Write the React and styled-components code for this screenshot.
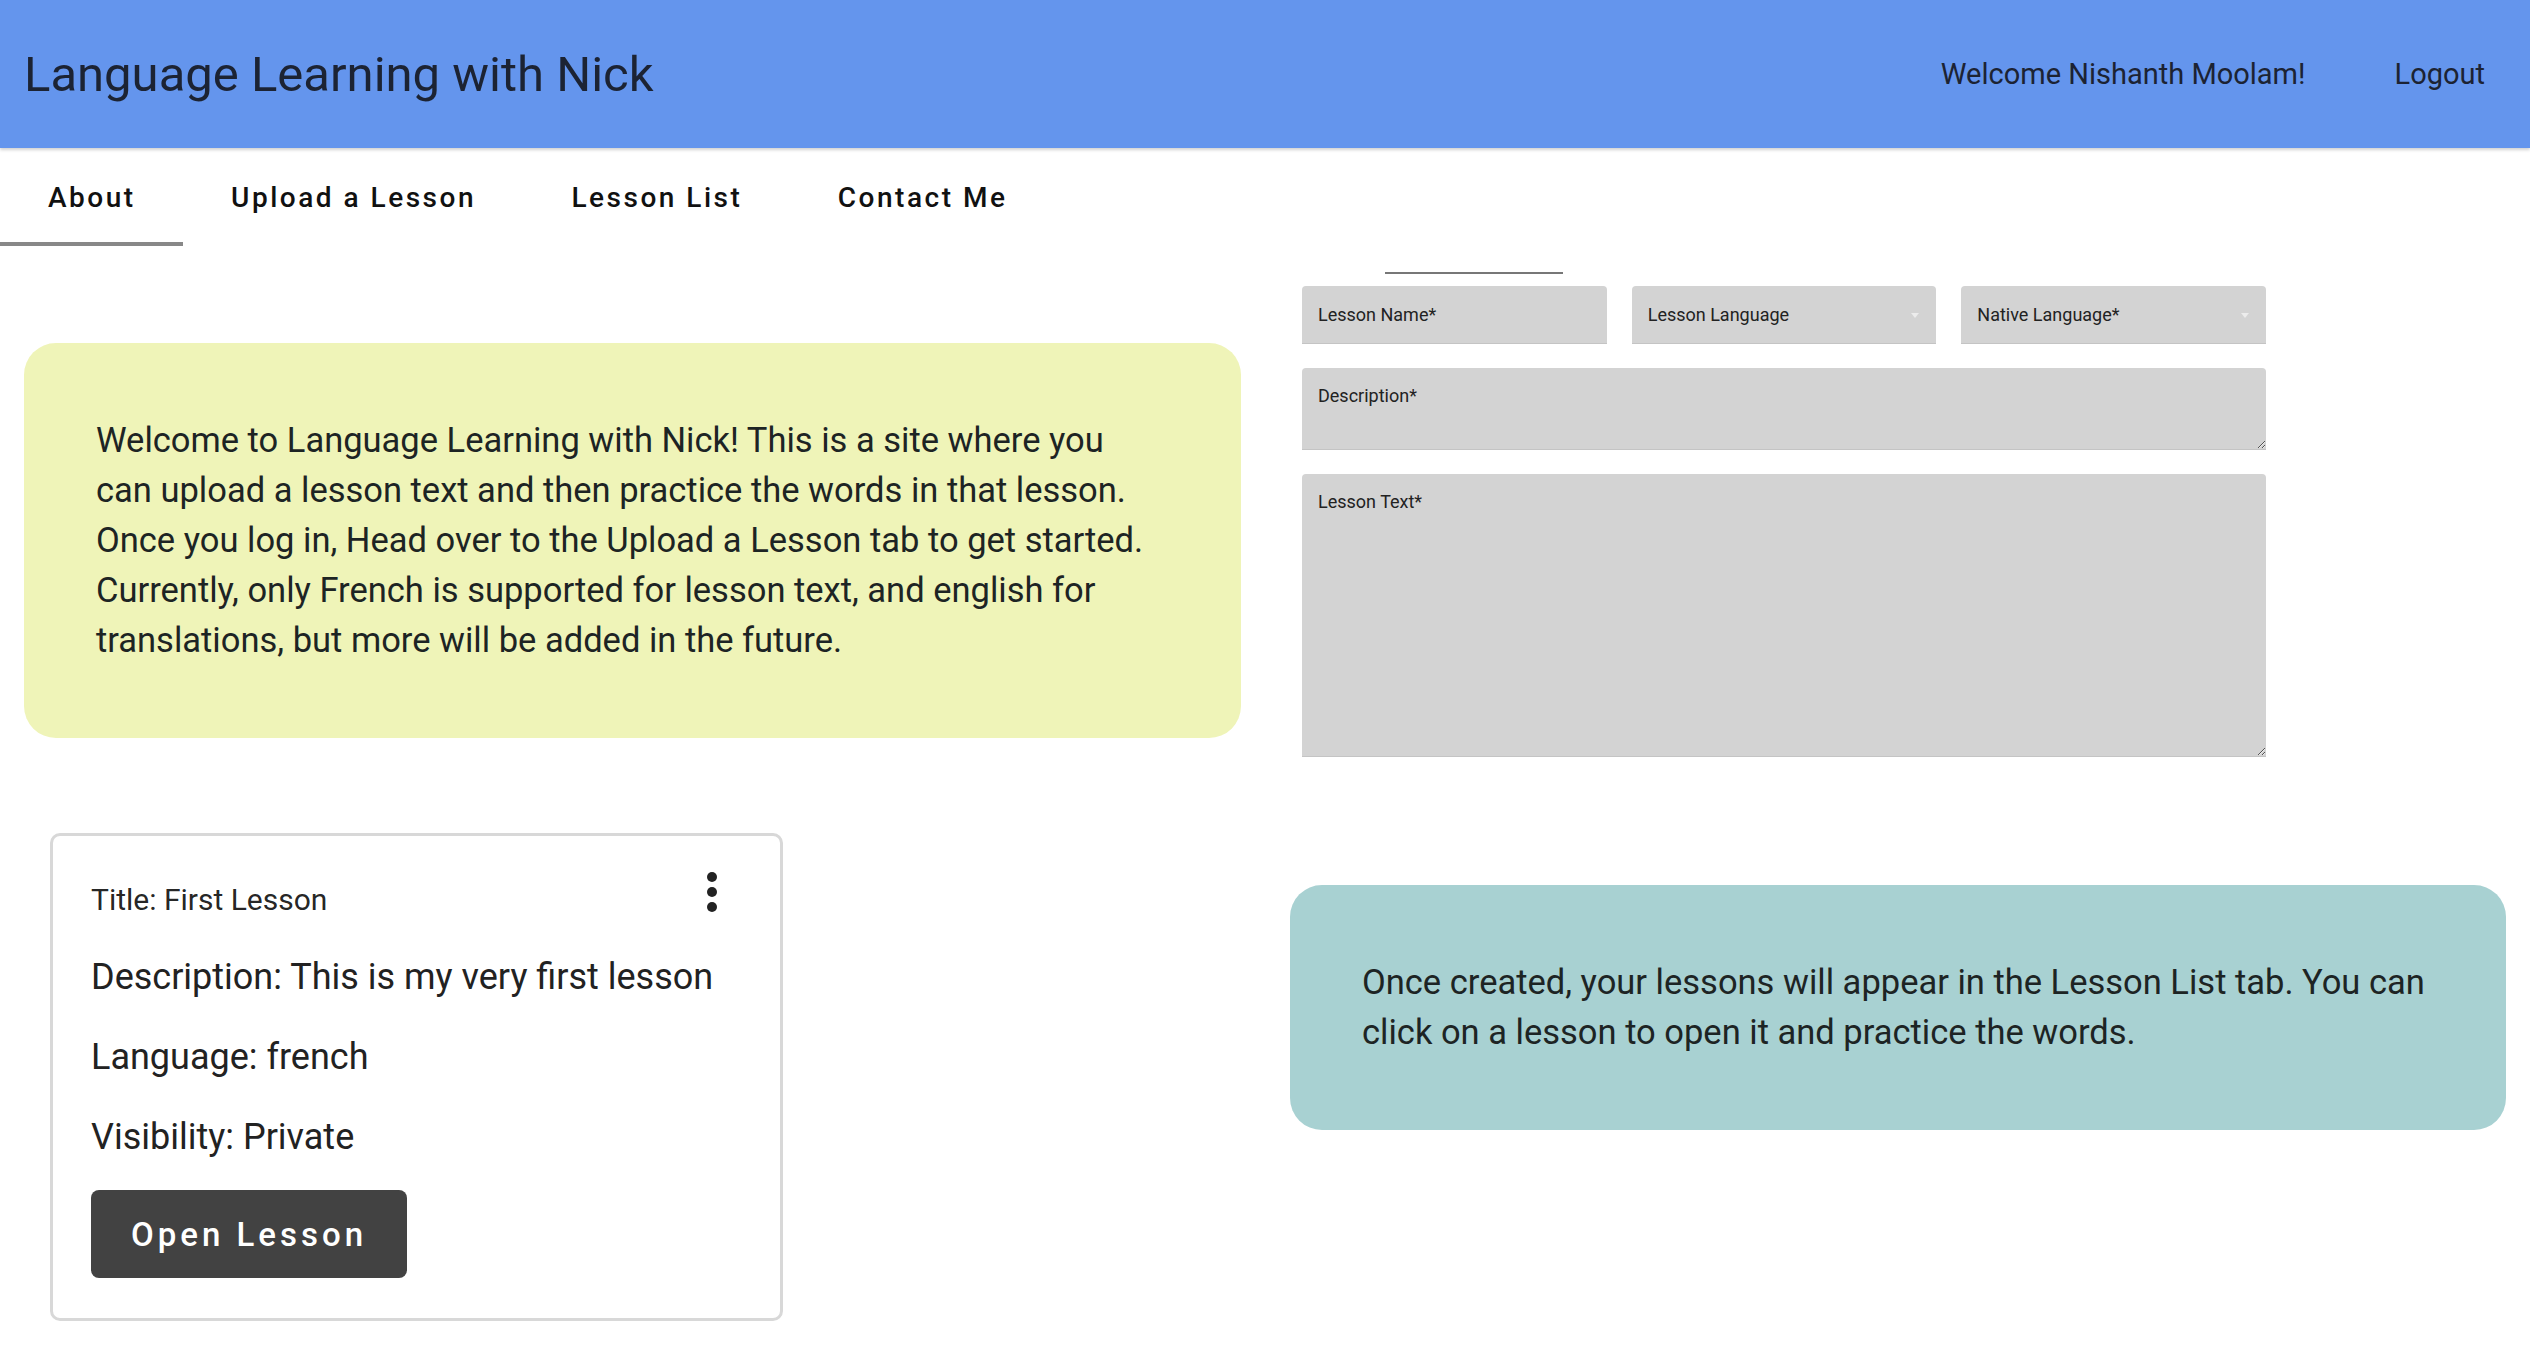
import styled, { createGlobalStyle } from "styled-components";

const GlobalStyle = createGlobalStyle`
  body {
    margin: 0;
    background: #ffffff;
    font-family: Roboto, "Liberation Sans", Arial, sans-serif;
  }
  * { box-sizing: border-box; }
`;

const Page = styled.div`
  color: rgba(0, 0, 0, 0.87);
`;

const Header = styled.header`
  height: 148px;
  background: #6495ed;
  display: flex;
  align-items: center;
  justify-content: space-between;
  padding: 0 45px 0 24px;
  box-shadow: 0 2px 3px rgba(0, 0, 0, 0.18);
  position: relative;
  z-index: 1;
`;

const Brand = styled.h1`
  margin: 0;
  font-size: 49px;
  font-weight: 400;
  color: #1c2333;
`;

const UserArea = styled.div`
  display: flex;
  align-items: center;
  gap: 89px;
  font-size: 29px;
  color: #1c2333;
`;

const TabBar = styled.nav`
  display: flex;
  height: 98px;
`;

const Tab = styled.div`
  display: flex;
  align-items: center;
  padding: 4px 47.5px 0 48px;
  font-size: 28px;
  font-weight: 500;
  letter-spacing: 2.5px;
  color: #111;
  border-bottom: 4px solid ${(p) => (p.$active ? "#888888" : "transparent")};
  cursor: pointer;
`;

const Main = styled.main`
  display: grid;
  grid-template-columns: 1fr 1fr;
`;

const Column = styled.div`
  display: flex;
  flex-direction: column;
  align-items: flex-start;
  padding-top: ${(p) => p.$top}px;
`;

const InfoBox = styled.div`
  align-self: stretch;
  margin: ${(p) => p.$margin};
  padding: 72px 80px 73px 72px;
  border-radius: 32px;
  background: ${(p) => p.$bg};
  font-size: 34.5px;
  line-height: 50px;
  color: #1d2424;
`;

const Card = styled.div`
  margin: 95px 0 0 50px;
  width: 733px;
  height: 488px;
  border: 3px solid #d8d8d8;
  border-radius: 10px;
  padding: 26px 38px 0 38px;
`;

const CardHead = styled.div`
  display: flex;
  justify-content: space-between;
  align-items: flex-start;
  margin-bottom: 28px;
`;

const CardTitle = styled.div`
  margin-top: 18px;
  font-size: 30px;
  line-height: 40px;
`;

const IconButton = styled.button`
  width: 60px;
  height: 60px;
  padding: 0;
  border: none;
  background: none;
  color: #222;
  display: flex;
  align-items: center;
  justify-content: center;
`;

const CardLine = styled.div`
  font-size: 36px;
  line-height: 54px;
  margin-bottom: 26px;
  color: #222;
`;

const OpenButton = styled.button`
  margin-top: 0;
  height: 88px;
  padding: 0 40px;
  border: none;
  border-radius: 8px;
  background: #424242;
  color: #ffffff;
  font-family: Roboto, "Liberation Sans", Arial, sans-serif;
  font-size: 33px;
  font-weight: 500;
  letter-spacing: 4px;
`;

const Form = styled.form`
  margin-left: 37px;
  width: 964px;
  display: flex;
  flex-direction: column;
  gap: 24px;
`;

const FormIndicator = styled.div`
  margin: 0 0 -12px 83px;
  width: 178px;
  height: 2px;
  background: #777777;
`;

const FieldRow = styled.div`
  display: flex;
  gap: 25px;
`;

const fieldBase = `
  background: #d3d3d3;
  border: none;
  border-bottom: 1px solid #c4c4c4;
  border-radius: 4px 4px 0 0;
  font-family: Roboto, "Liberation Sans", Arial, sans-serif;
  font-size: 18px;
  color: #222;
  outline: none;
  &::placeholder { color: #222; opacity: 1; }
`;

const TextInput = styled.input`
  ${fieldBase}
  width: 305px;
  height: 58px;
  padding: 0 16px;
`;

const SelectWrap = styled.div`
  position: relative;
  width: 305px;
  height: 58px;
  &::after {
    content: "";
    position: absolute;
    right: 17px;
    top: 27px;
    border-left: 4px solid transparent;
    border-right: 4px solid transparent;
    border-top: 5px solid #ececec;
  }
`;

const Select = styled.select`
  ${fieldBase}
  appearance: none;
  width: 100%;
  height: 100%;
  padding: 0 16px;
`;

const TextArea = styled.textarea`
  ${fieldBase}
  display: block;
  width: 964px;
  height: ${(p) => p.$h}px;
  padding: 17px 16px;
  resize: vertical;
`;

const MoreVert = () => (
  <svg width="60" height="60" viewBox="0 0 24 24" fill="currentColor">
    <circle cx="12" cy="6" r="2" />
    <circle cx="12" cy="12" r="2" />
    <circle cx="12" cy="18" r="2" />
  </svg>
);

const tabs = ["About", "Upload a Lesson", "Lesson List", "Contact Me"];

export default function App() {
  return (
    <Page>
      <GlobalStyle />
      <Header>
        <Brand>Language Learning with Nick</Brand>
        <UserArea>
          <span>Welcome Nishanth Moolam!</span>
          <span>Logout</span>
        </UserArea>
      </Header>
      <TabBar>
        {tabs.map((t, i) => (
          <Tab key={t} $active={i === 0}>
            {t}
          </Tab>
        ))}
      </TabBar>
      <Main>
        <Column $top={97}>
          <InfoBox $bg="#eff4b8" $margin="0 24px">
            Welcome to Language Learning with Nick! This is a site where you
            can upload a lesson text and then practice the words in that lesson.
            Once you log in, Head over to the Upload a Lesson tab to get started.
            Currently, only French is supported for lesson text, and english for
            translations, but more will be added in the future.
          </InfoBox>
          <Card>
            <CardHead>
              <CardTitle>Title: First Lesson</CardTitle>
              <IconButton type="button">
                <MoreVert />
              </IconButton>
            </CardHead>
            <CardLine>Description: This is my very first lesson</CardLine>
            <CardLine>Language: french</CardLine>
            <CardLine>Visibility: Private</CardLine>
            <OpenButton type="button">Open Lesson</OpenButton>
          </Card>
        </Column>
        <Column $top={26}>
          <Form>
            <FormIndicator />
            <FieldRow>
              <TextInput placeholder="Lesson Name*" />
              <SelectWrap>
                <Select defaultValue="">
                  <option value="" disabled hidden>Lesson Language</option>
                  <option value="french">French</option>
                </Select>
              </SelectWrap>
              <SelectWrap>
                <Select defaultValue="">
                  <option value="" disabled hidden>Native Language*</option>
                  <option value="english">English</option>
                </Select>
              </SelectWrap>
            </FieldRow>
            <TextArea $h={82} placeholder="Description*" />
            <TextArea $h={283} placeholder="Lesson Text*" />
          </Form>
          <InfoBox $bg="#a8d1d2" $margin="128px 24px 0 25px">
            Once created, your lessons will appear in the Lesson List tab. You can
            click on a lesson to open it and practice the words.
          </InfoBox>
        </Column>
      </Main>
    </Page>
  );
}
